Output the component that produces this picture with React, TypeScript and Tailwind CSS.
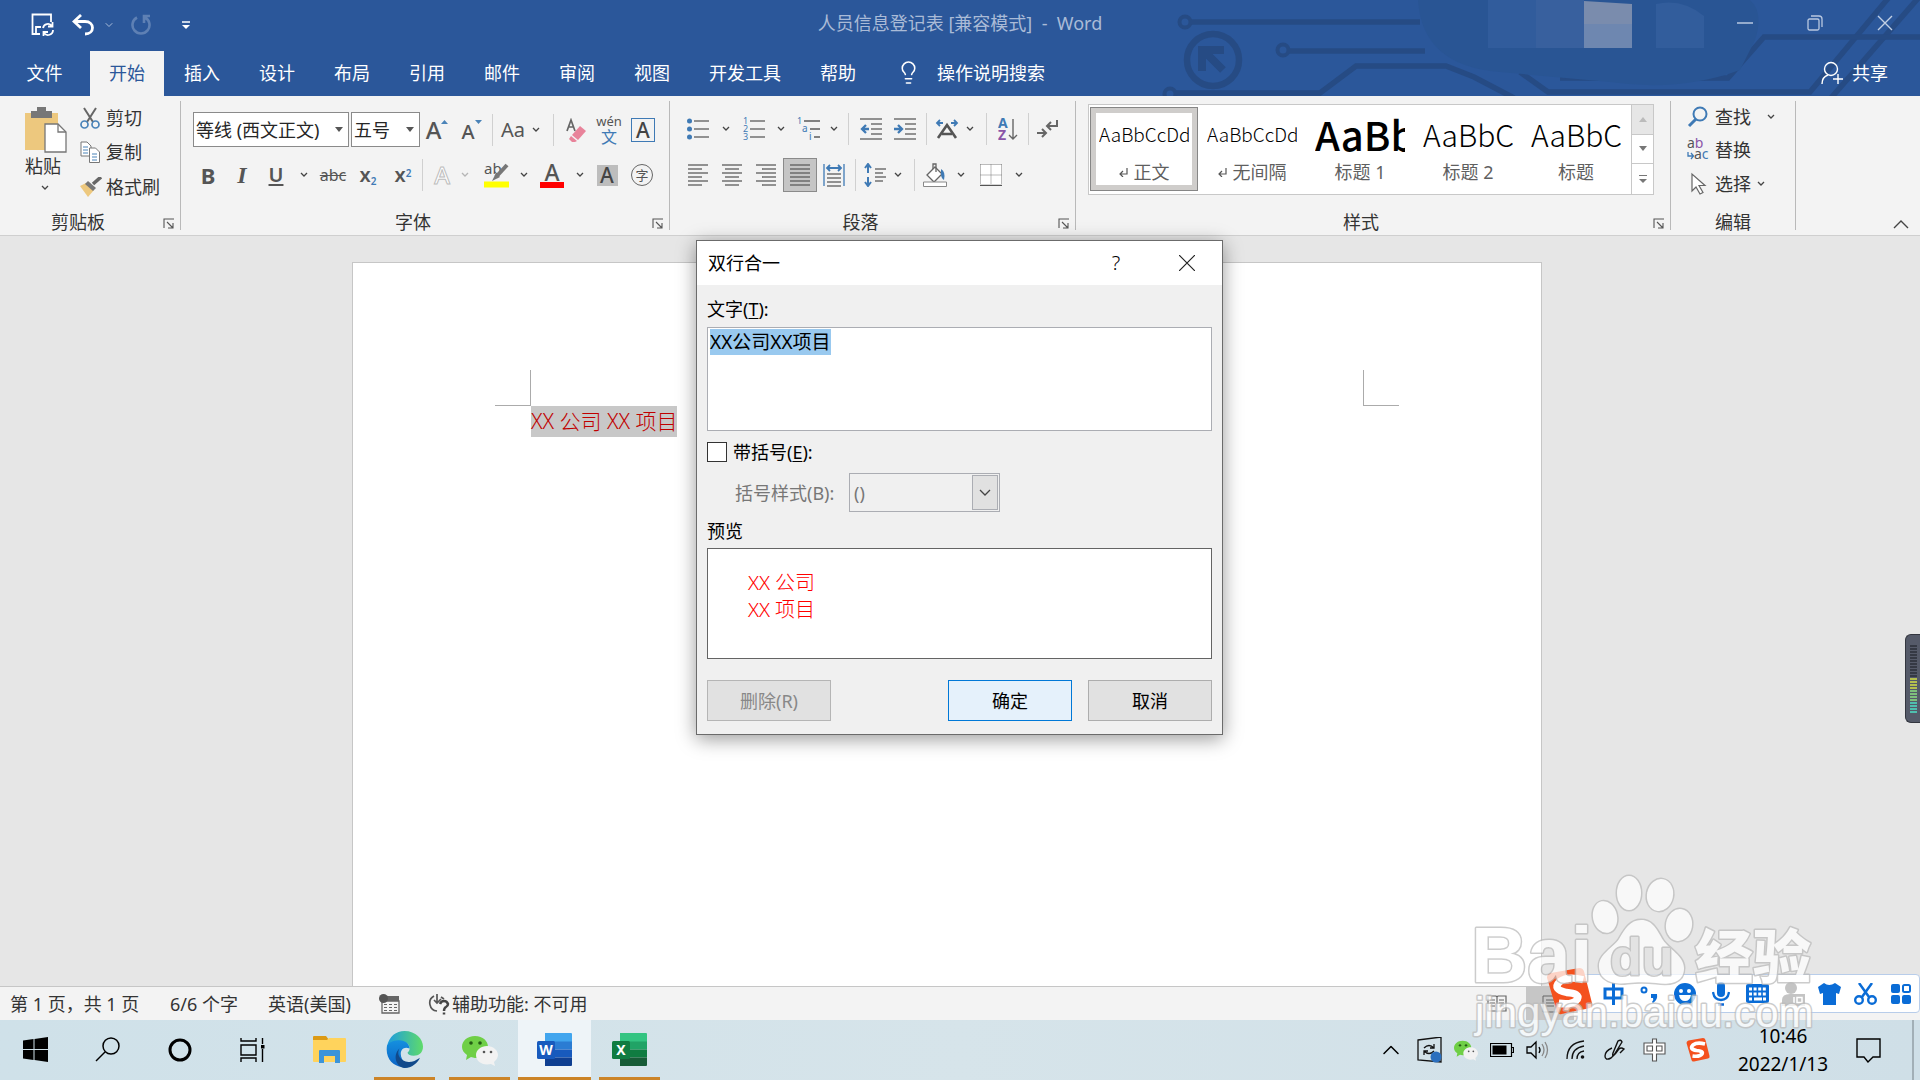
import React, { useEffect, useRef, useState } from 'react';
import { ChevronDown, ChevronUp, Lightbulb } from 'lucide-react';

type Kids = { children?: React.ReactNode };

const Svg = ({ w, h, className = '', children }: Kids & { w: number; h: number; className?: string }) => (
  <svg width={w} height={h} viewBox={`0 0 ${w} ${h}`} fill="none" className={`shrink-0 ${className}`} aria-hidden="true">
    {children}
  </svg>
);

const Tool = ({ w, label, className = '', children }: Kids & { w: string; label: string; className?: string }) => (
  <button type="button" aria-label={label} className={`flex h-[34px] shrink-0 items-center justify-center ${w} ${className}`}>
    {children}
  </button>
);

const Caret = ({ w, faded = false }: { w: string; faded?: boolean }) => (
  <button type="button" aria-label="更多" className={`flex h-[34px] shrink-0 items-center justify-center ${w}`}>
    <Svg w={8} h={6}>
      <path d="M1 1l3 3 3-3" stroke={faded ? '#b5b5b5' : '#444'} strokeWidth="1.3" />
    </Svg>
  </button>
);

const Sep = ({ w }: { w: string }) => (
  <div className={`flex h-8 shrink-0 justify-center ${w}`}>
    <div className="w-px bg-[#d0d0d0]" />
  </div>
);

const Launcher = () => (
  <button type="button" aria-label="对话框启动器" className="absolute right-[5px] top-2.5">
    <Svg w={12} h={11}>
      <path d="M1 10V1h10M4 4l6 6M10 5v5H5" stroke="#555" strokeWidth="1.1" />
    </Svg>
  </button>
);

const Group = ({ w, label, launcher = true, children }: Kids & { w: string; label: string; launcher?: boolean }) => (
  <section className={`my-[5px] flex shrink-0 flex-col border-r border-[#b9b9b9] ${w}`}>
    <div className="h-[107px]">{children}</div>
    <div className="relative h-[22px] text-center leading-[28px]">
      <span className={launcher ? 'mr-6' : ''}>{label}</span>
      {launcher && <Launcher />}
    </div>
  </section>
);

const lines = (xs: [number, number][], y0: number, step: number) =>
  xs.map(([a, b], i) => <path key={i} d={`M${a} ${y0 + i * step}H${b}`} stroke="#5c5c5c" strokeWidth="1.3" />);

/* ---------- title bar ---------- */

const Circuit = () => (
  <Svg w={760} h={96} className="absolute right-0 top-0">
    <g stroke="#264b84" strokeWidth="5.5">
      <circle cx="25" cy="22" r="5.5" strokeWidth="4" />
      <path d="M31 22H260" />
      <circle cx="123" cy="50" r="5.5" strokeWidth="4" />
      <path d="M129 51H265" />
      <circle cx="53" cy="60" r="26" strokeWidth="6.5" />
      <path d="M42 71V50h22M42 49l21 21" strokeWidth="8" />
      <circle cx="10" cy="94" r="5.5" strokeWidth="4" />
      <path d="M16 93H160L196 66H286L314 77 354 98M360 72l28 20H650L730-4M671 98L760-4" />
      <path d="M400 78H568L604 37H760" />
    </g>
    <path d="M258 0H590q14 12 5 40L580 70Q520 92 450 82L340 72Q262 66 258 0Z" fill="#295594" />
    <path d="M328 0h96v48h-96z" fill="#315c9c" />
    <path d="M376 0h48v48h-48z" fill="#38609e" />
    <path d="M424 1l48 3v44h-48z" fill="#7a8cad" />
    <path d="M424 24l48 0v24h-48z" fill="#6e87b0" />
    <path d="M496 4q26-6 48 12v32h-48z" fill="#325d9c" />
  </Svg>
);

const TitleBar = () => (
  <div className="relative flex h-[51px] items-start justify-between">
    <div className="flex h-[50px] items-center pl-[31px]">
      <button type="button" aria-label="保存">
        <Svg w={23} h={24}>
          <path d="M9 21H1.500V1.500H20V9M5 21v-7h5" stroke="#fff" strokeWidth="1.8" />
          <path d="M12 15a5 5 0 0 1 9-2M22 17a5 5 0 0 1-9 3M21.500 9v4.500H17M12.500 23v-4H17" stroke="#fff" strokeWidth="1.8" />
        </Svg>
      </button>
      <button type="button" aria-label="撤消" className="ml-[18px]">
        <Svg w={23} h={22}>
          <path d="M9 1L2 7.500 9 14M2 7.500h11c10 0 10 12.500 0 12.500" stroke="#fff" strokeWidth="2.800" />
        </Svg>
      </button>
      <button type="button" aria-label="撤消选项" className="ml-2">
        <ChevronDown size={12} color="#a9bcd9" />
      </button>
      <button type="button" aria-label="恢复" className="ml-4">
        <Svg w={20} h={22}>
          <path d="M6 3.500a8.500 8.500 0 1 0 8 0M19 2h-6v7" stroke="#5e80b4" strokeWidth="2.600" />
        </Svg>
      </button>
      <button type="button" aria-label="自定义快速访问工具栏" className="ml-[31px]">
        <Svg w={8} h={9}>
          <path d="M0 1h8" stroke="#fff" strokeWidth="1.500" />
          <path d="M0 4h8l-4 4z" fill="#fff" />
        </Svg>
      </button>
    </div>
    <h1 className="absolute inset-x-0 top-2.5 whitespace-pre text-center text-[#aabbd7] leading-[26px]">
      {'人员信息登记表 [兼容模式]  -  Word'}
    </h1>
    <div className="flex h-[46px] items-center gap-[54px] pr-[27px]">
      <button type="button" aria-label="最小化">
        <Svg w={16} h={16}><path d="M0 8h16" stroke="#b9c8e0" strokeWidth="1.500" /></Svg>
      </button>
      <button type="button" aria-label="还原">
        <Svg w={16} h={16}>
          <rect x="1" y="4" width="11" height="11" rx="1.500" stroke="#b9c8e0" strokeWidth="1.300" />
          <path d="M4 1h8q3 0 3 3v8" stroke="#b9c8e0" strokeWidth="1.300" />
        </Svg>
      </button>
      <button type="button" aria-label="关闭">
        <Svg w={16} h={16}><path d="M1 1l14 14M15 1L1 15" stroke="#c3d0e4" strokeWidth="1.400" /></Svg>
      </button>
    </div>
  </div>
);

const tabs = ['开始', '插入', '设计', '布局', '引用', '邮件', '审阅', '视图', '开发工具', '帮助'];

const TabBar = () => (
  <nav className="relative flex h-[45px] items-center gap-px text-white">
    <button type="button" className="h-full w-[89px] pb-0.5 text-center">文件</button>
    {tabs.map((t) => (
      <button
        key={t}
        type="button"
        className={`h-full px-[19px] pb-0.5 ${t === '开始' ? 'bg-[#f3f3f3] text-[#2b579a]' : ''}`}
      >
        {t}
      </button>
    ))}
    <button type="button" className="ml-5 flex h-full items-center gap-4 pb-0.5">
      <Lightbulb size={25} strokeWidth={1.5} />
      操作说明搜索
    </button>
    <button type="button" className="ml-auto flex h-full items-center gap-2 pb-0.5 pr-8">
      <Svg w={23} h={24}>
        <circle cx="10" cy="8" r="6.500" stroke="#fff" strokeWidth="1.400" />
        <path d="M1 23c0-5 3-8 6-9M12 18h10M17 13v10" stroke="#fff" strokeWidth="1.400" />
      </Svg>
      共享
    </button>
  </nav>
);

/* ---------- ribbon ---------- */

const Clipboard = () => (
  <Group w="w-[181px]" label="剪贴板">
    <div className="flex pl-[25px]">
      <button type="button" className="flex w-[45px] flex-col items-start pt-1.5">
        <Svg w={42} h={46}>
          <path d="M0 6h33v37H0z" fill="#edc87e" />
          <path d="M6 4h6V0h9v4h6v7H6z" fill="#777" />
          <path d="M20 17h13l8 8v20H20z" fill="#fff" stroke="#777" strokeWidth="1.300" />
          <path d="M33 17v8h8" stroke="#777" strokeWidth="1.300" />
        </Svg>
        <span className="leading-[26px]">粘贴</span>
        <span className="flex w-10 justify-center">
          <Svg w={8} h={14}><path d="M1 7l3 3 3-3" stroke="#444" strokeWidth="1.300" /></Svg>
        </span>
      </button>
      <div className="ml-2.5 flex flex-col">
        <button type="button" className="flex h-[34px] items-center gap-1.5">
          <Svg w={20} h={22}>
            <path d="M4 1l9 14M16 1L7 15" stroke="#666" strokeWidth="2" />
            <circle cx="4.500" cy="17.500" r="3.500" stroke="#4a83b8" strokeWidth="1.700" />
            <circle cx="15.500" cy="17.500" r="3.500" stroke="#4a83b8" strokeWidth="1.700" />
          </Svg>
          剪切
        </button>
        <button type="button" className="flex h-[34px] items-center gap-1.5">
          <Svg w={20} h={22}>
            <path d="M1 1h6l4 4v10H1z" fill="#fff" stroke="#777" />
            <path d="M3 6h5M3 9h5M3 12h5" stroke="#4a83b8" />
            <path d="M9.500 7h6l4 4v10.500h-10z" fill="#fff" stroke="#777" />
            <path d="M12 13h5M12 16h5M12 19h5" stroke="#4a83b8" />
          </Svg>
          复制
        </button>
        <button type="button" className="flex h-[36px] items-center gap-1">
          <Svg w={22} h={20}>
            <path d="M0 9l6-3 8 7-6 7z" fill="#edc87e" />
            <path d="M8 4l8 7-3 3-8-7z" fill="#777" />
            <path d="M13 7l8-7" stroke="#666" strokeWidth="3.500" />
          </Svg>
          格式刷
        </button>
      </div>
    </div>
  </Group>
);

const Combo = ({ w, label, value }: { w: string; label: string; value: string }) => (
  <div className={`relative shrink-0 ${w}`}>
    <select aria-label={label} className="h-[35px] w-full appearance-none border border-[#8a8a8a] bg-white pl-0.5 text-[#262626]">
      <option>{value}</option>
    </select>
    <Svg w={8} h={5} className="pointer-events-none absolute right-1.5 top-[15px]">
      <path d="M0 0h8L4 5z" fill="#555" />
    </Svg>
  </div>
);

const FontGroup = () => (
  <Group w="w-[489px]" label="字体">
    <div className="flex items-center pl-3 pt-[11px] text-[#555]">
      <Combo w="w-[156px]" label="字体" value="等线 (西文正文)" />
      <div className="w-0.5" />
      <Combo w="w-[69px]" label="字号" value="五号" />
      <Tool w="w-[34px]" label="增大字号">
        <span className="text-[24px] font-medium leading-none">A</span>
        <Svg w={7} h={20}><path d="M0 4h7L3.500 0z" fill="#4a83b8" /></Svg>
      </Tool>
      <Tool w="w-[35px]" label="减小字号">
        <span className="pt-1 text-[20px] font-medium leading-none">A</span>
        <Svg w={7} h={20}><path d="M0 0h7L3.500 4z" fill="#4a83b8" /></Svg>
      </Tool>
      <Sep w="w-[6px]" />
      <Tool w="w-9" label="更改大小写"><span className="text-[20px]">Aa</span></Tool>
      <Caret w="w-2.5" />
      <Sep w="w-6" />
      <Tool w="w-[22px]" label="清除格式">
        <Svg w={20} h={24}>
          <path d="M1 13L5 2l4 11M2.500 9h5.500" stroke="#666" strokeWidth="1.700" />
          <path d="M14 8l6 5-8 9-6-5z" fill="#e8839a" />
          <path d="M5 18l6 5-2 1H6l-3-3z" fill="#e8839a" />
        </Svg>
      </Tool>
      <Tool w="w-11" label="拼音指南" className="flex-col">
        <span className="text-[13px] leading-[15px]">wén</span>
        <span className="text-[16px] leading-[16px] text-[#3f7ab5]">文</span>
      </Tool>
      <Tool w="w-[24px]" label="字符边框">
        <span className="h-6 w-6 shrink-0 border border-[#3f7ab5] text-center text-[21px] font-medium leading-[22px] text-[#444]">A</span>
      </Tool>
    </div>
    <div className="flex items-center pl-3 pt-[11px] text-[#555]">
      <Tool w="w-[30px]" label="加粗"><b className="text-[22px]">B</b></Tool>
      <Tool w="w-[38px]" label="倾斜"><i className="font-['Liberation_Serif'] text-[24px] font-bold">I</i></Tool>
      <Tool w="w-[30px]" label="下划线"><span className="text-[20px] font-semibold underline underline-offset-2">U</span></Tool>
      <Caret w="w-[26px]" />
      <Tool w="w-8" label="删除线"><span className="text-[16px] line-through">abc</span></Tool>
      <Tool w="w-[38px]" label="下标"><span className="text-[20px] font-semibold">x<sub className="text-[10px] text-[#3f7ab5]">2</sub></span></Tool>
      <Tool w="w-8" label="上标"><span className="text-[20px] font-semibold">x<sup className="text-[10px] text-[#3f7ab5]">2</sup></span></Tool>
      <Sep w="w-[6px]" />
      <Tool w="w-[34px]" label="文本效果">
        <span className="text-[24px] font-medium text-white [-webkit-text-stroke:1px_#bdbdbd]">A</span>
      </Tool>
      <Caret w="w-3" faded />
      <Tool w="w-[50px]" label="突出显示" >
        <Svg w={25} h={26}>
          <text x="0" y="12" fontSize="15" fill="#555">ab</text>
          <path d="M23 3L12 15" stroke="#777" strokeWidth="4" />
          <path d="M12 11l4 4-8 4z" fill="#777" />
          <path d="M0 19.500h25v6H0z" fill="#ff0" />
        </Svg>
      </Tool>
      <Caret w="w-[6px]" />
      <Tool w="w-[50px]" label="字体颜色" className="flex-col">
        <span className="text-[23px] font-medium leading-[20px]">A</span>
        <span className="h-1.5 w-6 bg-[#f00]" />
      </Tool>
      <Caret w="w-[6px]" />
      <Tool w="w-12" label="字符底纹">
        <span className="h-[21px] w-[21px] bg-[#bdbdbd] text-center text-[21px] font-medium leading-[21px] text-[#444]">A</span>
      </Tool>
      <Tool w="w-[22px]" label="带圈字符">
        <span className="h-[22px] w-[22px] shrink-0 rounded-full border border-[#666] text-center text-[13px] leading-5">字</span>
      </Tool>
    </div>
  </Group>
);

const Align = ({ xs }: { xs: [number, number][] }) => (
  <Svg w={22} h={24}>{lines(xs, 2, 4)}</Svg>
);

const ParagraphGroup = () => (
  <Group w="w-[406px]" label="段落">
    <div className="flex items-center pl-[11px] pt-[11px]">
      <Tool w="w-[34px]" label="项目符号">
        <Svg w={22} h={22}>
          {[3, 11, 19].map((y) => (
            <g key={y}><circle cx="2.500" cy={y} r="2.500" fill="#3f7ab5" /><path d={`M7 ${y}h15`} stroke="#5c5c5c" strokeWidth="1.300" /></g>
          ))}
        </Svg>
      </Tool>
      <Caret w="w-[22px]" />
      <Tool w="w-[34px]" label="编号">
        <Svg w={22} h={24}>
          {[4, 12, 20].map((y, i) => (
            <g key={y}><text x="0" y={y + 3} fontSize="9" fill="#3f7ab5">{i + 1}</text><path d={`M7 ${y}h15`} stroke="#5c5c5c" strokeWidth="1.300" /></g>
          ))}
        </Svg>
      </Tool>
      <Caret w="w-5" />
      <Tool w="w-9" label="多级列表">
        <Svg w={24} h={24}>
          <text x="0" y="7" fontSize="9" fill="#3f7ab5">1</text>
          <text x="5" y="15" fontSize="10" fill="#3f7ab5">a</text>
          <text x="12" y="23" fontSize="10" fill="#3f7ab5">i</text>
          <path d="M7 4h16M13 12h10M17 20h6" stroke="#5c5c5c" strokeWidth="1.300" />
        </Svg>
      </Tool>
      <Caret w="w-3.5" />
      <Sep w="w-3.5" />
      <Tool w="w-8" label="减少缩进">
        <Svg w={22} h={22}>
          {lines([[0, 22], [11, 22], [11, 22], [11, 22], [0, 22]], 1, 5)}
          <path d="M9 11H2M6 7l-4 4 4 4" stroke="#3f7ab5" strokeWidth="2.300" />
        </Svg>
      </Tool>
      <Tool w="w-9" label="增加缩进">
        <Svg w={22} h={22}>
          {lines([[0, 22], [11, 22], [11, 22], [11, 22], [0, 22]], 1, 5)}
          <path d="M0 11h7M4 7l4 4-4 4" stroke="#3f7ab5" strokeWidth="2.300" />
        </Svg>
      </Tool>
      <Sep w="w-[6px]" />
      <Tool w="w-9" label="中文版式">
        <Svg w={24} h={20}>
          <path d="M8 4H2M5 1L2 4l3 3M16 4h6M19 1l3 3-3 3" stroke="#3f7ab5" strokeWidth="1.800" />
          <path d="M3 19L12 6l9 13M7 15h10" stroke="#555" strokeWidth="2.600" />
        </Svg>
      </Tool>
      <Caret w="w-2.5" />
      <Sep w="w-[22px]" />
      <Tool w="w-[22px]" label="排序">
        <Svg w={20} h={24}>
          <text x="0" y="11" fontSize="14" fontWeight="700" fill="#3f7ab5">A</text>
          <text x="0" y="23" fontSize="14" fontWeight="700" fill="#8a55a8">Z</text>
          <path d="M15 2v20M11 18l4 4 4-4" stroke="#666" strokeWidth="1.400" />
        </Svg>
      </Tool>
      <Sep w="w-[18px]" />
      <Tool w="w-[22px]" label="显示编辑标记">
        <Svg w={22} h={20}>
          <path d="M20 1v6h-9M14 3l-4 4 4 4M0 14h8M5 10l4 4-4 4" stroke="#666" strokeWidth="2" />
        </Svg>
      </Tool>
    </div>
    <div className="flex items-center pl-[11px] pt-3">
      <Tool w="w-[34px]" label="左对齐"><Align xs={[[1, 21], [1, 15], [1, 21], [1, 15], [1, 21], [1, 15]]} /></Tool>
      <Tool w="w-[34px]" label="居中"><Align xs={[[1, 21], [4, 18], [1, 21], [4, 18], [1, 21], [4, 18]]} /></Tool>
      <Tool w="w-[34px]" label="右对齐"><Align xs={[[1, 21], [7, 21], [1, 21], [7, 21], [1, 21], [7, 21]]} /></Tool>
      <Tool w="w-[34px]" label="两端对齐" className="border border-[#8a8a8a] bg-[#c5c5c5]">
        <Align xs={[[1, 21], [1, 21], [1, 21], [1, 21], [1, 21], [1, 21]]} />
      </Tool>
      <Tool w="w-[34px]" label="分散对齐">
        <Svg w={22} h={24}>
          {lines([[4, 18], [4, 18], [4, 18], [4, 18]], 11, 4)}
          <path d="M1 1v22M21 1v22" stroke="#3f7ab5" strokeWidth="1.300" />
          <path d="M4 5h14M7 2L4 5l3 3M15 2l3 3-3 3" stroke="#3f7ab5" strokeWidth="1.800" />
        </Svg>
      </Tool>
      <Sep w="w-2" />
      <Tool w="w-8" label="行距">
        <Svg w={22} h={24}>
          <path d="M4 2v8M1 5l3-4 3 4M4 14v8M1 19l3 4 3-4" stroke="#3f7ab5" strokeWidth="2" />
          {lines([[11, 22], [11, 19], [11, 22], [11, 19]], 6, 4)}
        </Svg>
      </Tool>
      <Caret w="w-3.5" />
      <Sep w="w-[18px]" />
      <Tool w="w-6" label="底纹">
        <Svg w={24} h={24}>
          <path d="M4 12l8-8 7 7-8 8z" fill="#fff" stroke="#666" strokeWidth="1.300" />
          <path d="M10 6V1h3v8" stroke="#666" strokeWidth="1.300" />
          <path d="M18 6q5 3 3 11-3-2-3-6z" fill="#3f7ab5" />
          <path d="M.5 19h23v4.500H.5z" fill="#fff" stroke="#888" />
        </Svg>
      </Tool>
      <Caret w="w-7" />
      <Tool w="w-8" label="边框">
        <Svg w={22} h={22}>
          <path d="M0 0h22v22H0z" fill="#fff" />
          <path d="M.5.5h21M.5.5v20M21.500.5v20M11 .5v20M.5 11h21" stroke="#777" strokeDasharray="1 1" />
          <path d="M0 21.500h22" stroke="#555" strokeWidth="1.500" />
        </Svg>
      </Tool>
      <Caret w="w-6" />
    </div>
  </Group>
);

const styleItems = [
  { sample: 'AaBbCcDd', name: '正文', mark: true, size: 'text-[19px] font-light' },
  { sample: 'AaBbCcDd', name: '无间隔', mark: true, size: 'text-[19px] font-light' },
  { sample: 'AaBb', name: '标题 1', mark: false, size: 'text-[40px] font-medium' },
  { sample: 'AaBbC', name: '标题 2', mark: false, size: 'text-[30px] font-light' },
  { sample: 'AaBbC', name: '标题', mark: false, size: 'text-[30px] font-light' },
];

const StylesGroup = () => (
  <Group w="w-[595px]" label="样式">
    <div className="flex pl-3 pt-[3px]">
      <div className="flex h-[91px] w-[566px] border border-[#c8c8c8] bg-white">
        <div className="flex flex-1 p-px pt-0.5">
          {styleItems.map((s, i) => (
            <button
              key={i}
              type="button"
              className={`h-[84px] w-[108px] overflow-hidden px-[3px] pb-1 ${i === 0 ? 'border border-[#868686] outline-[5px] -outline-offset-6 outline-[#cfcdcb]' : 'border border-transparent'}`}
            >
              <div className={`mx-[5px] h-[50px] overflow-hidden whitespace-nowrap text-left font-['Noto_Sans_CJK_SC'] leading-[50px] text-black ${s.size}`}>
                {s.sample}
              </div>
              <div className="flex h-[26px] items-center justify-center gap-1.5 text-[#5f5f5f]">
                {s.mark && (
                  <Svg w={9} h={9}><path d="M8 0v6H1M4 3L1 6l3 3" stroke="#555" strokeWidth="1.200" /></Svg>
                )}
                {s.name}
              </div>
            </button>
          ))}
        </div>
        <div className="grid w-[22px] grid-rows-3 divide-y divide-[#c8c8c8] border-l border-[#c8c8c8]">
          <button type="button" aria-label="上一行" className="flex items-center justify-center bg-[#e6e6e6]">
            <Svg w={8} h={5}><path d="M0 5h8L4 0z" fill="#bbb" /></Svg>
          </button>
          <button type="button" aria-label="下一行" className="flex items-center justify-center">
            <Svg w={8} h={5}><path d="M0 0h8L4 5z" fill="#777" /></Svg>
          </button>
          <button type="button" aria-label="其他样式" className="flex items-center justify-center">
            <Svg w={8} h={8}><path d="M0 0h8v1H0zM0 4h8L4 8z" fill="#777" /></Svg>
          </button>
        </div>
      </div>
    </div>
  </Group>
);

const EditGroup = () => (
  <Group w="w-[125px]" label="编辑" launcher={false}>
    <div className="flex flex-col items-start pl-4">
      <button type="button" className="flex h-8 items-center gap-1.5">
        <Svg w={22} h={22}>
          <circle cx="13" cy="8" r="6.500" stroke="#3f7ab5" strokeWidth="2" />
          <path d="M9 13l-7 7" stroke="#3f7ab5" strokeWidth="3" />
        </Svg>
        查找
        <Svg w={8} h={6} className="ml-2.5"><path d="M1 1l3 3 3-3" stroke="#444" strokeWidth="1.300" /></Svg>
      </button>
      <button type="button" className="flex h-[34px] items-center gap-1.5">
        <Svg w={22} h={24}>
          <text x="0" y="10" fontSize="14" fill="#555">a<tspan fill="#8a55a8">b</tspan></text>
          <text x="7" y="21" fontSize="14" fill="#555">a<tspan fill="#3f7ab5">c</tspan></text>
          <path d="M1 14v4h5M4 15l2.500 3L4 21" stroke="#3f7ab5" strokeWidth="1.300" />
        </Svg>
        替换
      </button>
      <button type="button" className="flex h-[34px] items-center gap-1.5">
        <Svg w={22} h={24}>
          <path d="M5 2v17l4-4 4 7 3-1.500-4-7h6z" fill="#fff" stroke="#666" strokeWidth="1.200" />
        </Svg>
        选择
        <Svg w={8} h={6}><path d="M1 1l3 3 3-3" stroke="#444" strokeWidth="1.300" /></Svg>
      </button>
    </div>
  </Group>
);

/* ---------- dialog ---------- */

const Dialog = () => {
  const [text, setText] = useState('XX公司XX项目');
  const box = useRef<HTMLTextAreaElement>(null);

  useEffect(() => {
    box.current?.focus();
    box.current?.select();
  }, []);

  return (
    <div
      role="dialog"
      aria-labelledby="dlg-title"
      className="absolute left-1/2 top-[240px] -ml-[264px] w-[527px] border border-[#6b6b6b] bg-[#f0f0f0] pb-[13px] text-black shadow-[0_4px_18px_rgba(0,0,0,0.4)]"
    >
      <div className="flex h-11 items-center bg-white pl-[11px]">
        <h2 id="dlg-title" className="flex-1">双行合一</h2>
        <button type="button" className="w-[18px] text-[20px] font-light" aria-label="帮助">?</button>
        <button type="button" aria-label="关闭" className="ml-[54px] mr-[27px]">
          <Svg w={16} h={16}><path d="M0 0l16 16M16 0L0 16" stroke="#222" strokeWidth="1.200" /></Svg>
        </button>
      </div>
      <div className="flex flex-col px-2.5 pt-2.5">
        <label htmlFor="dlg-text" className="h-8 leading-[28px]">文字(<u className="underline-offset-2">T</u>):</label>
        <textarea
          id="dlg-text"
          ref={box}
          value={text}
          onChange={(e) => setText(e.target.value)}
          className="h-[104px] resize-none border border-[#abadb3] bg-white px-0.5 pt-0.5 text-[19px] leading-6 outline-none selection:bg-[#99c9ef] selection:text-black"
        />
        <label className="mt-2 flex h-[26px] items-center gap-1.5">
          <input type="checkbox" className="h-5 w-5 appearance-none border border-[#333] bg-white" />
          <span>带括号(<u className="underline-offset-2">E</u>):</span>
        </label>
        <div className="mt-2 flex items-center pl-7 text-[#777]">
          <label htmlFor="dlg-bracket" className="w-[114px]">括号样式(B):</label>
          <div className="relative w-[151px]">
            <select id="dlg-bracket" disabled className="h-[39px] w-full appearance-none border border-[#abadb3] bg-[#f0f0f0] pl-1 text-[#777] opacity-100">
              <option>()</option>
            </select>
            <div className="pointer-events-none absolute inset-y-0.5 right-0.5 flex w-[26px] items-center justify-center border border-[#abadb3] bg-[#e1e1e1]">
              <Svg w={12} h={8}><path d="M1 1l5 5 5-5" stroke="#444" strokeWidth="1.300" /></Svg>
            </div>
          </div>
        </div>
        <div className="h-9 leading-[38px]">预览</div>
        <div className="h-[111px] border border-[#646464] bg-white pl-10 pt-5 text-[20px] font-light leading-[27px] text-[#f00]">
          <p>XX 公司</p>
          <p>XX 项目</p>
        </div>
        <div className="mt-[21px] flex gap-4">
          <button type="button" disabled className="mr-auto h-[41px] w-[124px] border border-[#b5b5b5] bg-[#e1e1e1] text-[#888]">删除(R)</button>
          <button type="button" className="h-[41px] w-[124px] border border-[#0078d7] bg-[#e5f1fb]">确定</button>
          <button type="button" className="h-[41px] w-[124px] border border-[#adadad] bg-[#e1e1e1]">取消</button>
        </div>
      </div>
    </div>
  );
};

/* ---------- document ---------- */

const Document = () => (
  <main className="flex flex-1 justify-center overflow-hidden bg-[#e6e6e6] pr-[26px] pt-[26px]">
    <div className="w-[1190px] border border-b-0 border-[#c6c6c6] bg-white pt-[107px]">
      <div className="flex justify-between px-[142px]">
        <div className="h-9 w-9 border-b border-r border-[#ababab]" />
        <div className="h-9 w-9 border-b border-l border-[#ababab]" />
      </div>
      <p className="pl-[178px] text-[21px] font-light leading-[31px] text-[#c00000]">
        <span className="inline-block bg-[#c8c8c8]">XX 公司 XX 项目</span>
      </p>
    </div>
  </main>
);

const StatusBar = () => (
  <footer className="flex h-[34px] items-center border-t border-[#c6c6c6] bg-[#f3f3f3] pl-2.5 text-[#333]">
    <span className="w-40">第 1 页，共 1 页</span>
    <span className="w-[98px]">6/6 个字</span>
    <span className="w-[111px]">英语(美国)</span>
    <Svg w={21} h={20}>
      <path d="M3 7h17v12H3z" stroke="#666" strokeWidth="1.300" />
      <path d="M8 2h12v5H8z" fill="#666" />
      <circle cx="4.500" cy="4.500" r="4.500" fill="#555" />
      <path d="M5 10.500h13M5 13.500h13M5 16.500h13" stroke="#666" strokeDasharray="3 2" />
    </Svg>
    <Svg w={22} h={22} className="ml-7">
      <path d="M6 3a8 8 0 0 0 3 15M9 1v9M6 7l3 3 4-4M13 4l3 2" stroke="#555" strokeWidth="1.700" />
      <path d="M12 11q1-3 4-3t4 3q0 2-2 3t-2 4M16 19.500v2" stroke="#444" strokeWidth="2.500" />
    </Svg>
    <span className="ml-0.5">辅助功能: 不可用</span>
    <div className="ml-auto flex h-full items-center gap-[19px] pr-[346px]">
      <Svg w={20} h={18}>
        <path d="M1 1h8l1 1 1-1h8v15h-8l-1 1-1-1H1zM10 2v15" stroke="#666" strokeWidth="1.200" />
        <path d="M3 5h5M3 8h5M3 11h5M12 5h5M12 8h5M12 11h5" stroke="#666" />
      </Svg>
      <div className="flex h-full w-12 items-center justify-center bg-[#c6c6c6]">
        <Svg w={16} h={18}><path d="M1 1h14v16H1zM4 5h8M4 8h8M4 11h8" stroke="#666" /></Svg>
      </div>
    </div>
  </footer>
);

/* ---------- input method bar ---------- */

const SogouMark = ({ size }: { size: number }) => (
  <svg width={size} height={size} viewBox="0 0 48 48" fill="none" className="shrink-0" aria-hidden="true">
    <path d="M1 10q0-4 4-5L34 0q4 0 5 4l8 32q1 4-3 5L16 47q-4 1-5-3z" fill="#f4511e" />
    <path d="M38 12Q22 8 14 14q-8 8 7 11 14 1 11 7-4 6-19 4" stroke="#fff" strokeWidth="7.500" />
  </svg>
);

const InputBar = () => (
  <div className="absolute bottom-[67px] right-0 flex h-[39px] w-[374px] items-center justify-end">
    <div className="grid h-full w-[342px] grid-cols-9 items-center justify-items-center rounded-sm border border-[#b8cdea] bg-white pl-4">
      <Svg w={21} h={22}><path d="M2 6h17v9H2zM10.500 0v22" stroke="#0a6cd6" strokeWidth="3" /></Svg>
      <Svg w={18} h={18}>
        <circle cx="4" cy="5" r="2.500" stroke="#0a6cd6" strokeWidth="2" />
        <path d="M11 9h6q1 6-4 9l-1-1q2-2 1-4h-2z" fill="#0a6cd6" />
      </Svg>
      <Svg w={22} h={22}>
        <circle cx="11" cy="11" r="11" fill="#0a6cd6" />
        <circle cx="7" cy="8" r="2" fill="#fff" /><circle cx="15" cy="8" r="2" fill="#fff" />
        <path d="M5 12h12q-1 6-6 6t-6-6z" fill="#fff" />
      </Svg>
      <Svg w={18} h={24}>
        <rect x="5" y="0" width="8" height="15" rx="4" fill="#0a6cd6" />
        <path d="M1 10q1 8 8 8t8-8M6 22.500h6" stroke="#0a6cd6" strokeWidth="2.300" />
      </Svg>
      <Svg w={23} h={19}>
        <rect width="23" height="19" rx="2" fill="#0a6cd6" />
        <path d="M3 5h17M3 10h17" stroke="#fff" strokeWidth="3" strokeDasharray="3 1.600" /><path d="M3 15h3M8 15h8M17 15h3" stroke="#fff" strokeWidth="3" />
      </Svg>
      <Svg w={23} h={24}>
        <circle cx="9" cy="6" r="6" fill="#c4c4c4" />
        <path d="M0 24v-6q0-6 8-6h15v12z" fill="#c4c4c4" />
        <path d="M12 15v6M15 15.500h5v5h-5z" stroke="#fff" strokeWidth="1.500" />
      </Svg>
      <Svg w={23} h={22}>
        <path d="M6 0q5 4 11 0l6 4-2 7-3-1v12H5V10l-3 1-2-7z" fill="#0a6cd6" />
      </Svg>
      <Svg w={23} h={22}>
        <path d="M5 0l10 14M18 0L8 14" stroke="#0a6cd6" strokeWidth="2.500" />
        <circle cx="5" cy="17" r="3.800" stroke="#0a6cd6" strokeWidth="2.400" />
        <circle cx="18" cy="17" r="3.800" stroke="#0a6cd6" strokeWidth="2.400" />
      </Svg>
      <Svg w={20} h={20}>
        <rect width="9" height="9" rx="2" fill="#0a6cd6" />
        <rect y="11" width="9" height="9" rx="2" fill="#0a6cd6" />
        <rect x="11" y="11" width="9" height="9" rx="2" fill="#0a6cd6" />
        <rect x="12" y="1" width="7" height="7" rx="1.500" stroke="#0a6cd6" strokeWidth="2" />
      </Svg>
    </div>
    <div className="absolute -top-1.5 left-0"><SogouMark size={47} /></div>
  </div>
);

/* ---------- watermark ---------- */

const Watermark = () => (
  <svg width="360" height="190" viewBox="0 0 360 190" className="pointer-events-none absolute bottom-5 right-[95px] font-['Liberation_Sans','Noto_Sans_CJK_SC',sans-serif]" aria-hidden="true">
    <g fill="#fff" stroke="#bcbcbc" strokeWidth="3" paintOrder="stroke" strokeLinejoin="round" opacity="0.75">
      <text x="6" y="112" fontSize="78" fontWeight="700">Bai</text>
      <text x="230" y="108" fontSize="58" fontWeight="900" fontFamily="Noto Sans CJK SC">经验</text>
      <ellipse cx="164" cy="23" rx="12" ry="17" />
      <ellipse cx="195" cy="25" rx="13" ry="16" transform="rotate(12 195 25)" />
      <ellipse cx="140" cy="47" rx="12" ry="16" transform="rotate(-12 140 47)" />
      <ellipse cx="214" cy="55" rx="13" ry="16" transform="rotate(10 214 55)" />
      <path d="M176 50c12 0 16 10 22 20 6 9 21 16 21 28 0 16-16 17-28 15-9-1-20-1-28 0-14 2-29-2-29-17 0-12 14-18 20-27 6-10 11-19 22-19z" />
      <text x="145" y="105" fontSize="52" fontWeight="700" fill="#e3e3e3">du</text>
      <text x="10" y="157" fontSize="42">jingyan.baidu.com</text>
    </g>
  </svg>
);

/* ---------- taskbar ---------- */

const WeChat = ({ size }: { size: number }) => (
  <svg width={size} height={size} viewBox="0 0 36 36" fill="none" className="shrink-0" aria-hidden="true">
    <path d="M13 4c8 0 13 5 13 11 0 7-6 11-13 11l-4-1-5 3 1-5C2 21 0 18 0 15 0 9 5 4 13 4z" fill="#6fcf46" />
    <circle cx="9" cy="11" r="1.800" fill="#245c14" /><circle cx="18" cy="11" r="1.800" fill="#245c14" />
    <path d="M25 14c6 0 11 4 11 9 0 3-2 5-4 7l1 4-4-2c-9 2-15-3-15-9 0-5 5-9 11-9z" fill="#f2f2f2" />
    <circle cx="22" cy="20" r="1.300" fill="#555" /><circle cx="29" cy="20" r="1.300" fill="#555" />
  </svg>
);

const OfficeIcon = ({ letter, c }: { letter: string; c: string[] }) => (
  <Svg w={36} h={34}>
    <path d="M8 0h26q1 0 1 1v8H8z" fill={c[0]} />
    <path d="M8 8.500h27v8H8z" fill={c[1]} />
    <path d="M8 16.500h27v8H8z" fill={c[2]} />
    <path d="M8 24.500h27V32q0 1-1 1H8z" fill={c[3]} />
    <rect y="8" width="18" height="18" rx="1.500" fill={c[4]} />
    <text x="9" y="22" fontSize="14" fontWeight="700" fill="#fff" textAnchor="middle">{letter}</text>
  </Svg>
);

const TaskItem = ({ label, w, open = false, active = false, children }: Kids & { label: string; w: string; open?: boolean; active?: boolean }) => (
  <button
    type="button"
    aria-label={label}
    className={`flex h-full items-center justify-center border-b-[3px] pt-0.5 ${w} ${open ? 'border-[#cc8427]' : 'border-transparent'} ${active ? 'bg-[#eef4f8]' : ''}`}
  >
    {children}
  </button>
);

const Taskbar = () => (
  <div className="flex h-[60px] items-center bg-linear-to-r from-[#cfe1e9] via-[#d6e4ea] to-[#cfdfe7] text-black">
    <TaskItem label="开始" w="w-[71px]">
      <Svg w={25} h={25}><path d="M0 3.500l10.500-1.500v10H0zM11.500 2L25 0v12H11.500zM0 13h10.500v10L0 21.500zM11.500 13H25v12l-13.500-2z" fill="#000" /></Svg>
    </TaskItem>
    <TaskItem label="搜索" w="w-[72px]">
      <Svg w={25} h={25}><circle cx="16" cy="9" r="8" stroke="#000" strokeWidth="1.500" /><path d="M10 15l-9 9" stroke="#000" strokeWidth="1.500" /></Svg>
    </TaskItem>
    <TaskItem label="Cortana" w="w-[73px]">
      <Svg w={24} h={24}><circle cx="12" cy="12" r="10" stroke="#000" strokeWidth="3" /></Svg>
    </TaskItem>
    <TaskItem label="任务视图" w="w-[72px]">
      <Svg w={25} h={24}>
        <path d="M1 0v3h15V0M1 24v-4h15v4M1 7h15v10H1zM22.500 0v6M22.500 11v13" stroke="#000" strokeWidth="1.400" />
        <path d="M21 7h3.500v3.500H21z" fill="#000" />
      </Svg>
    </TaskItem>
    <TaskItem label="文件资源管理器" w="w-[82px]">
      <Svg w={33} h={28}>
        <path d="M0 1q0-1 1-1h12l3 4H0z" fill="#dc9a14" />
        <path d="M0 4h14l2-2h16q1 0 1 1v22q0 1-1 1H1q-1 0-1-1z" fill="#ffd35c" />
        <path d="M6 26V15q0-1 1-1h19q1 0 1 1v12h-5v-7H11v7H6z" fill="#3b94d9" />
      </Svg>
    </TaskItem>
    <div className="w-1" />
    <TaskItem label="Edge" w="w-[61px]" open>
      <svg width="37" height="37" viewBox="0 0 36 36" fill="none" aria-hidden="true">
        <defs>
          <linearGradient id="edge-a" x1="0" y1="0" x2="1" y2="0"><stop stopColor="#1c9be0" /><stop offset="1" stopColor="#5fdb6a" /></linearGradient>
          <linearGradient id="edge-b" x1="0" y1="0" x2="0" y2="1"><stop stopColor="#1590df" /><stop offset="1" stopColor="#0b62c4" /></linearGradient>
        </defs>
        <path d="M1 15C3 5 10 0 18 0c11 0 18 8 18 15 0 6-4 9-9 9-4 0-6-1-6-3 1-1 2-2 2-4 0-4-4-7-9-7-6 0-11 3-13 5z" fill="url(#edge-a)" />
        <path d="M1 14C4 10 9 9 13 9c6 0 10 4 10 8-9-4-12 8-4 14 3 2 5 3 5 3-3 2-6 2-8 1C6 34-1 26 1 14z" fill="url(#edge-b)" />
        <path d="M13 17c-4 8 4 14 12 13 4-1 6-3 8-4-2 5-8 10-15 10-8-1-12-12-5-19z" fill="#114a8b" />
      </svg>
    </TaskItem>
    <div className="w-3.5" />
    <TaskItem label="微信" w="w-[61px]" open><WeChat size={36} /></TaskItem>
    <div className="w-2" />
    <TaskItem label="Word" w="w-[73px]" open active>
      <OfficeIcon letter="W" c={['#41a5ee', '#2b7cd3', '#185abd', '#103f91', '#185abd']} />
    </TaskItem>
    <div className="w-2" />
    <TaskItem label="Excel" w="w-[61px]" open>
      <OfficeIcon letter="X" c={['#33c481', '#21a366', '#107c41', '#185c37', '#107c41']} />
    </TaskItem>

    <div className="ml-auto flex h-full items-center">
      <button type="button" aria-label="显示隐藏的图标" className="mr-3"><ChevronUp size={28} strokeWidth={1.3} /></button>
      <Svg w={25} h={26}>
        <path d="M1 3l23-3v25L1 23z" stroke="#111" strokeWidth="1.300" />
        <path d="M7 11q5-5 10 0M17 14q-5 5-10 0M17 7v4h-4M7 18v-4h4" stroke="#111" strokeWidth="1.300" />
        <circle cx="19" cy="20" r="5.500" fill="#2b6fbe" />
      </Svg>
      <div className="ml-3"><WeChat size={24} /></div>
      <Svg w={24} h={14} className="ml-3"><path d="M.5.5h21v13H.5zM22 4.500h1.500v5H22" stroke="#000" strokeWidth="1.200" /><path d="M2.500 2.500h14v9h-14z" fill="#000" /></Svg>
      <Svg w={24} h={20} className="ml-3">
        <path d="M1 7h4l5-5v16l-5-5H1z" stroke="#000" strokeWidth="1.300" />
        <path d="M13 7q2 3 0 6" stroke="#000" strokeWidth="1.300" /><path d="M16 4q4 6 0 12M19 2q5 8 0 16" stroke="#888" strokeWidth="1.300" />
      </Svg>
      <Svg w={20} h={20} className="ml-4">
        <path d="M1 19Q1 3 18 1M6 19Q6 8 18 6M11 19q0-7 7-8" stroke="#111" strokeWidth="1.300" /><circle cx="16.500" cy="17" r="1.800" fill="#111" />
      </Svg>
      <Svg w={21} h={22} className="ml-[18px]">
        <path d="M9 14L14 2q3-2 4 1l-8 13q-2 2-1-2zM8 9q-7 3-7 8t6 2q5-4 8-9 2-2 5 0l-4 4" stroke="#111" strokeWidth="1.400" />
      </Svg>
      <Svg w={23} h={24} className="ml-[18px]">
        <path d="M1 5h8.500V1h4v4H22v11h-8.500v7h-4v-7H1zM4 8h5.500v5H4zM13.500 8H19v5h-5.500z" fill="#fff" stroke="#555" strokeWidth="1.100" />
      </Svg>
      <div className="ml-5"><SogouMark size={24} /></div>
      <div className="ml-4 w-[114px] text-center text-[19px] leading-7">
        <div>10:46</div>
        <div>2022/1/13</div>
      </div>
      <button type="button" aria-label="通知" className="ml-4 mr-[31px]">
        <Svg w={25} h={25}><path d="M1 1h23v18h-7l-5 5-4-5H1z" stroke="#000" strokeWidth="1.400" /></Svg>
      </button>
      <div className="mr-[6px] h-full w-0.5 bg-[#a2afb6]" />
    </div>
  </div>
);

const Meter = () => (
  <div className="absolute right-0 top-[634px] flex h-[89px] w-[15px] flex-col items-center justify-center gap-px rounded-l-md border border-r-0 border-[#33363f] bg-[#555a69]">
    {Array.from({ length: 23 }, (_, i) => (
      <div key={i} className={`h-0.5 w-[7px] ${i < 11 ? 'bg-[#353944]' : i < 15 ? 'bg-[#b5c04e]' : i < 19 ? 'bg-[#7ec07c]' : 'bg-[#4fbfae]'}`} />
    ))}
  </div>
);

const App: React.FC = () => {
  return (
    <div className="relative flex min-h-screen flex-col overflow-hidden font-['Noto_Sans','Noto_Sans_CJK_SC',sans-serif] text-[18px] leading-[26px] text-[#333]">
      <header className="relative bg-[#2b579a]">
        <Circuit />
        <TitleBar />
        <TabBar />
      </header>
      <div className="relative flex h-[140px] border-b border-[#cfcfcf] bg-[#f3f3f3]">
        <Clipboard />
        <FontGroup />
        <ParagraphGroup />
        <StylesGroup />
        <EditGroup />
        <button type="button" aria-label="折叠功能区" className="ml-auto mr-[11px] self-end pb-1.5">
          <Svg w={16} h={9}><path d="M1 8l7-7 7 7" stroke="#444" strokeWidth="1.400" /></Svg>
        </button>
      </div>
      <Document />
      <StatusBar />
      <Taskbar />
      <Meter />
      <InputBar />
      <Watermark />
      <Dialog />
    </div>
  );
};

export default App;
